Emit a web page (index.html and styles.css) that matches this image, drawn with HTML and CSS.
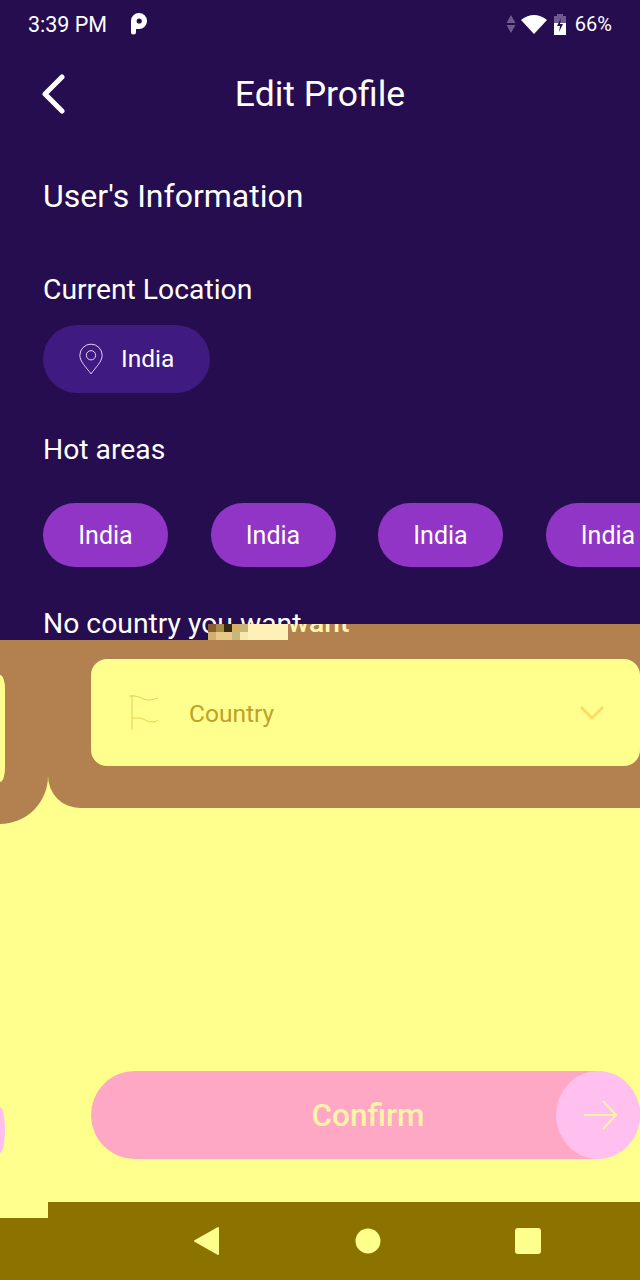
FILE: index.html
```html
<!DOCTYPE html>
<html lang="en">
<head>
    <meta charset="UTF-8">
    <meta name="viewport" content="width=device-width, initial-scale=1.0">
    <title>Edit Profile</title>
    <link rel="stylesheet" href="styles.css">
</head>
<body>
    <div class="profile">
        <div class="status-bar">
            <span class="clock">3:39 PM</span>
            <svg class="p-logo" width="18" height="22" viewBox="0 0 18 22">
                <path d="M1 8a8 8 0 1 1 8 8H6v3a2.500 2.500 0 0 1-5 0z" fill="#fff"/>
                <circle cx="9.2" cy="8" r="2.6" fill="#260d4f"/>
            </svg>
            <span class="status-right">
                <svg class="signal" width="10" height="20" viewBox="0 0 10 20">
                    <path d="M5 1l4.500 8H.5zM5 19L.5 11h9z" fill="#6f5a8f"/>
                </svg>
                <svg width="28" height="20" viewBox="0 0 28 20">
                    <path d="M1 6Q14-4 27 6L14 20z" fill="#fff"/>
                </svg>
                <svg width="14" height="24" viewBox="0 0 14 24">
                    <path d="M4 2h6v2h3v7H1V4h3z" fill="#6f5a8f"/>
                    <path d="M1 11h12v12H1z" fill="#fff"/>
                    <path d="M8 6L4 14h3l-1 6 4-8H7z" fill="#260d4f"/>
                </svg>
                <span class="battery">66%</span>
            </span>
        </div>

        <header class="title-bar">
            <svg class="back" width="24" height="40" viewBox="0 0 24 40">
                <path d="M20 3L3 20l17 17" fill="none" stroke="#fff" stroke-width="5" stroke-linecap="round" stroke-linejoin="round"/>
            </svg>
            <h1>Edit Profile</h1>
        </header>

        <h2 class="section-title">User's Information</h2>

        <p class="label current-label">Current Location</p>
        <div class="location-pill">
            <svg width="26" height="34" viewBox="0 0 28 36">
                <path d="M14 34C9 27 2 21 2 14a12 12 0 0 1 24 0c0 7-7 13-12 20z" fill="none" stroke="#f0dcff" stroke-width="1"/>
                <circle cx="14" cy="14" r="5" fill="none" stroke="#f0dcff" stroke-width="1"/>
            </svg>
            <span class="location-name">India</span>
        </div>

        <p class="label hot-label">Hot areas</p>
        <div class="hot-list">
            <span class="hot-pill">India</span>
            <span class="hot-pill">India</span>
            <span class="hot-pill">India</span>
            <span class="hot-pill">India</span>
        </div>

        <p class="label missing-label">No country you want</p>
    </div>

    <div class="broken-layer">
        <div class="col-left">
            <div class="panel panel-left">
                <div class="card-sliver"></div>
            </div>
            <div class="fill fill-left">
                <div class="circle-sliver"></div>
            </div>
            <div class="nav nav-left"></div>
        </div>

        <div class="col-right">
            <div class="strip">
                <div class="noise">
                    <i class="n1"></i><i class="n2"></i><i class="n3"></i><i class="n4"></i>
                    <i class="n5"></i><i class="n6"></i><i class="n7"></i><i class="n8"></i>
                    <i class="n9"></i><i class="n10"></i>
                </div>
                <span class="strip-text">want</span>
            </div>
            <div class="panel panel-right">
                <div class="select">
                    <svg class="flag" width="34" height="38" viewBox="0 0 34 38">
                        <path d="M4 1v35M1 2h6c5 0 7 4 13 4 4 0 7-1 10-2M4 24h7c5 0 7 4 13 4 3 0 5-1 6-2" fill="none" stroke="#dcc64a" stroke-width="0.8"/>
                    </svg>
                    <span class="select-text">Country</span>
                    <svg class="chevron" width="26" height="16" viewBox="0 0 26 16">
                        <path d="M2 2l11 11L24 2" fill="none" stroke="#fbdc68" stroke-width="3"/>
                    </svg>
                </div>
            </div>
            <div class="fill fill-right">
                <button class="confirm">
                    <span>Confirm</span>
                    <span class="confirm-arrow">
                        <svg width="36" height="30" viewBox="0 0 36 30">
                            <path d="M1 15h32M20 1l13 14-13 14" fill="none" stroke="#fff3a8" stroke-width="2"/>
                        </svg>
                    </span>
                </button>
            </div>
            <div class="nav nav-right">
                <svg width="28" height="30" viewBox="0 0 28 30">
                    <path d="M25 2v26L2 15z" fill="#ffff8d" stroke="#ffff8d" stroke-width="2" stroke-linejoin="round"/>
                </svg>
                <svg width="26" height="26" viewBox="0 0 26 26">
                    <circle cx="13" cy="13" r="12.5" fill="#ffff8d"/>
                </svg>
                <svg width="28" height="28" viewBox="0 0 28 28">
                    <rect x="1" y="1" width="26" height="26" rx="3" fill="#ffff8d"/>
                </svg>
            </div>
        </div>
    </div>
</body>
</html>
```

FILE: styles.css
```css
* {
    box-sizing: border-box;
}
html, body {
    margin: 0;
    padding: 0;
}
body {
    width: 640px;
    height: 1280px;
    overflow: hidden;
    background: #260d4f;
    color: #fff;
    font-family: Roboto, "Liberation Sans", sans-serif;
}

/* top part */
.profile {
    height: 640px;
    padding: 0 0 0 43px;
    overflow: hidden;
}
.status-bar {
    display: flex;
    align-items: center;
    height: 48px;
    margin-left: -15px;
    padding-right: 28px;
}
.clock {
    font-size: 21.5px;
}
.p-logo {
    margin-left: 23px;
}
.status-right {
    display: flex;
    align-items: center;
    gap: 5px;
    margin-left: auto;
}
.signal {
    margin-right: -1px;
}
.battery {
    font-size: 20px;
    margin-left: 3px;
}
.title-bar {
    position: relative;
    display: flex;
    align-items: center;
    justify-content: center;
    height: 92px;
    margin-left: -43px;
}
.title-bar h1 {
    margin: 0;
    font-size: 35.5px;
    font-weight: 400;
}
.back {
    position: absolute;
    left: 42px;
    top: 26px;
}
.section-title {
    margin: 37px 0 0;
    font-size: 32px;
    font-weight: 400;
    line-height: 38px;
}
.label {
    margin: 0;
    font-size: 28.3px;
    line-height: 32px;
}
.current-label {
    margin-top: 59px;
}
.location-pill {
    display: flex;
    align-items: center;
    gap: 17px;
    width: 167px;
    height: 68px;
    margin-top: 19px;
    padding-left: 35px;
    border-radius: 34px;
    background: #3f1a80;
    font-size: 24.5px;
}
.location-name {
    margin-bottom: 2px;
}
.hot-label {
    margin-top: 41px;
}
.hot-list {
    display: flex;
    gap: 42.5px;
    margin-top: 37px;
}
.hot-pill {
    flex: none;
    display: flex;
    align-items: center;
    justify-content: center;
    width: 125px;
    height: 64px;
    border-radius: 32px;
    background: #9035c5;
    font-size: 25px;
}
.missing-label {
    margin-top: 41px;
}

/* the colour-shifted layer over the bottom */
.broken-layer {
    display: grid;
    grid-template-columns: 48px 592px;
    height: 656px;
    margin-top: -16px;
    background: #ffff8d;
    background-clip: content-box;
    padding-top: 16px;
    position: relative;
}
.col-left {
    display: flex;
    flex-direction: column;
}
.col-right {
    display: flex;
    flex-direction: column;
    margin-top: -16px;
}
.panel {
    flex: none;
    background: #b38150;
}
.panel-left {
    height: 184px;
    padding-top: 35px;
    border-bottom-right-radius: 48px;
}
.card-sliver {
    width: 5px;
    height: 107px;
    background: #ffff8d;
    border-radius: 0 5px 5px 0 / 0 14px 14px 0;
}
.fill {
    flex: 1;
    background: #ffff8d;
}
.fill-left {
    display: flex;
    align-items: flex-start;
    padding-top: 283px;
}
.circle-sliver {
    width: 5px;
    height: 46px;
    background: #ffc0f0;
    border-radius: 0 100% 100% 0 / 0 50% 50% 0;
}
.nav {
    flex: none;
    background: #8c7300;
}
.nav-left {
    height: 62px;
}
.strip {
    display: flex;
    height: 16px;
    margin-left: 160px;
    background: #b38150;
    overflow: hidden;
}
.noise {
    position: relative;
    flex: none;
    width: 80px;
    height: 16px;
    background: #fff0b8;
}
.noise i {
    position: absolute;
    display: block;
    width: 8px;
    height: 8px;
}
.n1 { left: 0; top: 0; background: #8a5a30; }
.n2 { left: 8px; top: 0; background: #a88a48; }
.n3 { left: 16px; top: 0; background: #3a2a10; }
.n4 { left: 24px; top: 0; background: #d8b068; }
.n5 { left: 32px; top: 0; background: #c8b478; }
.n6 { left: 0; top: 8px; background: #d0b070; }
.n7 { left: 8px; top: 8px; background: #e8c888; }
.n8 { left: 16px; top: 8px; background: #e8c888; }
.n9 { left: 24px; top: 8px; background: #c8b878; }
.n10 { left: 32px; top: 8px; background: #f8e8b0; }
.strip-text {
    margin-top: -17px;
    font-size: 28.3px;
    font-weight: 500;
    line-height: 32px;
    color: #fff6b0;
}
.panel-right {
    display: flex;
    height: 168px;
    padding: 19px 0 0 43px;
    border-bottom-left-radius: 32px;
}
.select {
    display: flex;
    align-items: center;
    width: 549px;
    height: 107px;
    padding: 0 35px 0 37px;
    border-radius: 16px;
    background: #ffff8d;
}
.select-text {
    margin: 2px 0 0 27px;
    font-size: 24.5px;
    color: #bfa02a;
}
.chevron {
    margin-left: auto;
}
.fill-right {
    padding: 263px 0 0 43px;
}
.confirm {
    position: relative;
    display: flex;
    align-items: center;
    justify-content: center;
    width: 549px;
    height: 88px;
    padding: 0 0 0 5px;
    border: none;
    border-radius: 44px;
    background: #ffa8c5;
    color: #fff3a8;
    font-family: inherit;
    font-size: 31.5px;
    font-weight: 500;
}
.confirm-arrow {
    position: absolute;
    right: 0;
    top: 0;
    display: flex;
    align-items: center;
    justify-content: center;
    width: 84px;
    height: 88px;
    padding-left: 5px;
    border-radius: 50%;
    background: #ffc0f0;
}
.nav-right {
    display: flex;
    align-items: center;
    justify-content: space-between;
    height: 78px;
    padding: 0 98px 0 145px;
}
```
